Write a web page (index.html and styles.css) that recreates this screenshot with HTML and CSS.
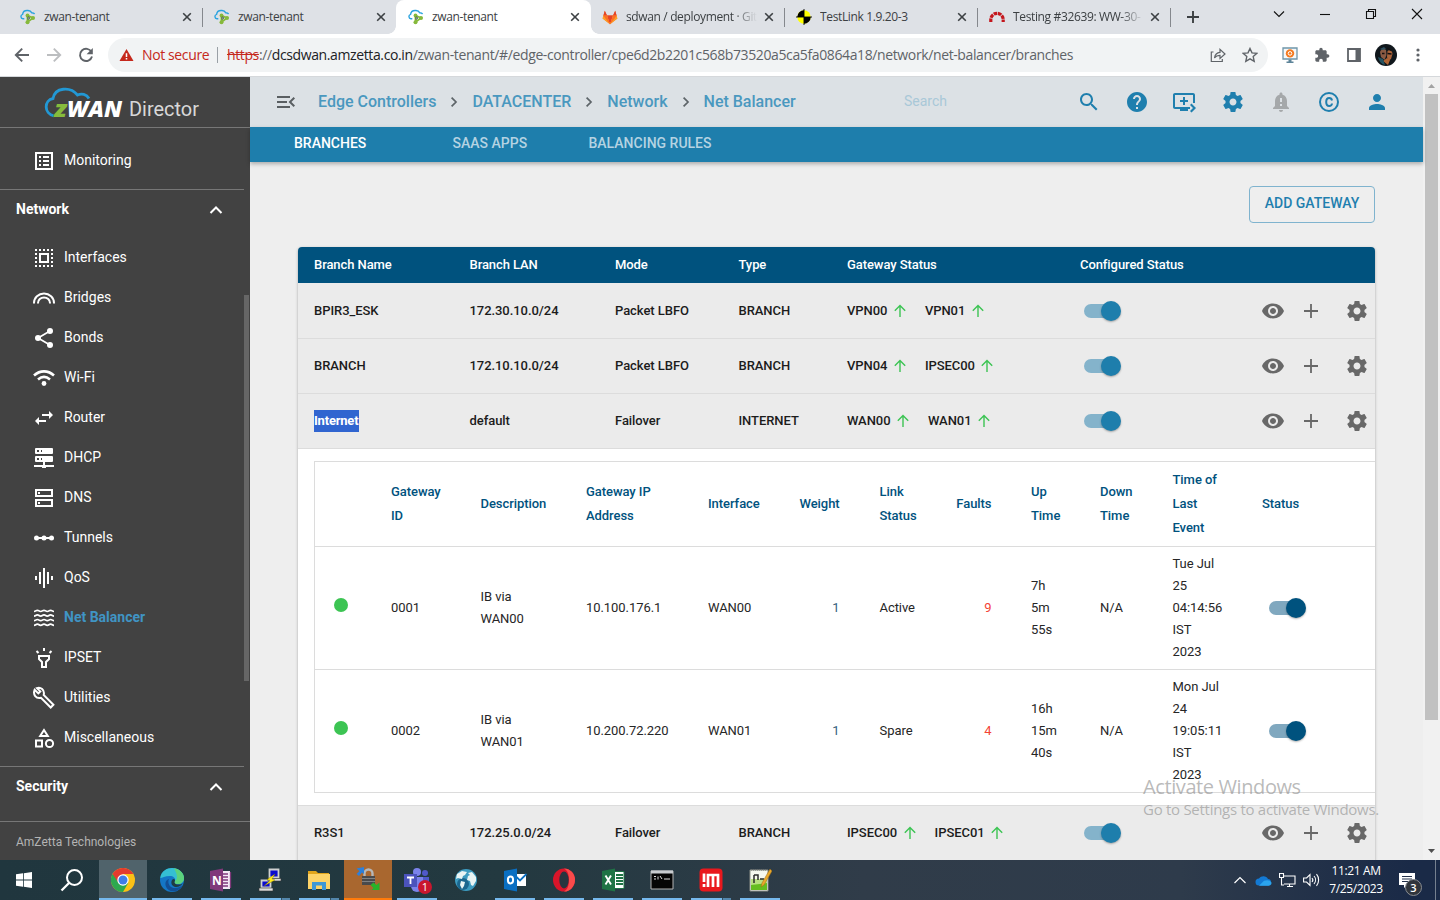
FILE: index.html
```html
<!DOCTYPE html>
<html lang="en">
<head>
<meta charset="utf-8">
<title>zwan-tenant</title>
<link rel="stylesheet" href="styles.css">
</head>
<body>
<svg class="defs" width="0" height="0">
  <symbol id="zwan" viewBox="0 0 16 16"><path d="M4.300 9.800H3a2.300 2.300 0 0 1-.4-4.500C3 2.500 5.300 1.200 8 1.500c2 .2 3.200 1.200 3.800 2.300 1.200 0 2.200.3 2.800 1.200" fill="none" stroke="#2aa3df" stroke-width="1.400"/><path d="M7.500 6.500V13M7.500 6.500L13 9l-5.500 4" stroke="#86b93b" stroke-width="1.800" fill="none"/><circle cx="7.500" cy="6.500" r="1.900" fill="#86b93b"/><circle cx="13" cy="9" r="2" fill="#86b93b"/><circle cx="7.500" cy="13.200" r="2" fill="#86b93b"/><path d="M8 7.700l2 1.300-2 1.500z" fill="#d8e7ee" stroke="#44544a" stroke-width=".8"/></symbol>
  <symbol id="x" viewBox="0 0 10 10"><path d="M1.200 1.200l7.600 7.600M8.800 1.200L1.200 8.800" stroke="#3c4043" stroke-width="1.600" fill="none"/></symbol>
  <symbol id="up" viewBox="0 0 16 16"><path d="M8 14V2.600M2.800 7.800L8 2.600l5.200 5.200" stroke="#3cc453" stroke-width="1.400" fill="none"/></symbol>
  <symbol id="chev" viewBox="0 0 10 12"><path d="M2.600 1.600L7 6l-4.400 4.400" stroke="#5d6468" stroke-width="1.700" fill="none"/></symbol>
  <symbol id="caret" viewBox="0 0 14 10"><path d="M1.500 8L7 2.500 12.500 8" stroke="#fff" stroke-width="2" fill="none"/></symbol>
  <symbol id="eye" viewBox="0 0 24 24"><path d="M12 4.500C7 4.500 2.730 7.610 1 12c1.730 4.390 6 7.500 11 7.500s9.270-3.110 11-7.500c-1.730-4.390-6-7.500-11-7.500zM12 17c-2.760 0-5-2.240-5-5s2.240-5 5-5 5 2.240 5 5-2.240 5-5 5zm0-8c-1.660 0-3 1.340-3 3s1.340 3 3 3 3-1.340 3-3-1.340-3-3-3z"/></symbol>
  <symbol id="plus" viewBox="0 0 24 24"><path d="M19 12.900h-6.100V19h-1.800v-6.100H5v-1.800h6.100V5h1.800v6.100H19z"/></symbol>
  <symbol id="gear" viewBox="0 0 24 24"><path d="M19.430 12.980c.04-.32.07-.64.07-.98s-.03-.66-.07-.98l2.110-1.650c.19-.15.24-.42.12-.64l-2-3.460c-.12-.22-.39-.3-.61-.22l-2.490 1c-.52-.4-1.080-.73-1.690-.98l-.38-2.650C14.460 2.180 14.250 2 14 2h-4c-.25 0-.46.18-.49.42l-.38 2.650c-.61.25-1.170.59-1.690.98l-2.490-1c-.23-.09-.49 0-.61.22l-2 3.460c-.13.22-.07.49.12.64l2.110 1.650c-.04.32-.07.65-.07.98s.03.66.07.98l-2.110 1.650c-.19.15-.24.42-.12.64l2 3.460c.12.22.39.3.61.22l2.490-1c.52.4 1.080.73 1.690.98l.38 2.650c.03.24.24.42.49.42h4c.25 0 .46-.18.49-.42l.38-2.650c.61-.25 1.170-.59 1.690-.98l2.490 1c.23.09.49 0 .61-.22l2-3.460c.12-.22.07-.49-.12-.64l-2.110-1.650zM12 15.500c-1.930 0-3.500-1.570-3.500-3.500s1.570-3.500 3.500-3.500 3.500 1.570 3.500 3.500-1.570 3.500-3.500 3.500z"/></symbol>
</svg>

<div class="tabstrip">
  <div class="tab"><svg class="fav"><use href="#zwan"/></svg><span class="tt">zwan-tenant</span><svg class="close"><use href="#x"/></svg></div>
  <div class="tab sep"><svg class="fav"><use href="#zwan"/></svg><span class="tt">zwan-tenant</span><svg class="close"><use href="#x"/></svg></div>
  <div class="tab active"><svg class="fav"><use href="#zwan"/></svg><span class="tt">zwan-tenant</span><svg class="close"><use href="#x"/></svg></div>
  <div class="tab"><svg class="fav" viewBox="0 0 16 16"><path d="M8 15.300L.6 9.600 2.800 1.800 5 6.600h6l2.200-4.800 2.200 7.800z" fill="#fc6d26"/><path d="M8 15.300L5 6.600h6z" fill="#e24329"/><path d="M.6 9.600L1.500 6.600H5l3 8.700zM15.400 9.600l-.9-3H11l-3 8.700z" fill="#fca326"/><path d="M2.800 1.800L5 6.600H1.400zM13.200 1.800L11 6.600h3.600z" fill="#e24329"/><path d="M1.400 6.600H5L8 15.300 3 9zM14.600 6.600H11L8 15.300 13 9z" fill="#fc6d26"/></svg><span class="tt fade">sdwan / deployment · Git</span><svg class="close"><use href="#x"/></svg></div>
  <div class="tab sep"><svg class="fav" viewBox="0 0 16 16"><circle cx="8" cy="8" r="6.700" fill="#ff0"/><path d="M8 8V1.300A6.700 6.700 0 0 0 1.300 8zM8 8v6.700A6.700 6.700 0 0 0 14.700 8z" fill="#000"/><path d="M8 0v16M0 8h16" stroke="#000" stroke-width=".9"/></svg><span class="tt">TestLink 1.9.20-3</span><svg class="close"><use href="#x"/></svg></div>
  <div class="tab sep"><svg class="fav" viewBox="0 0 16 16"><path d="M1.800 14V11.500A6.200 6.200 0 0 1 14.200 11.500V14" transform="translate(0 -1)" fill="none" stroke="#c4161c" stroke-width="3.200" stroke-dasharray="3.600 .7"/></svg><span class="tt fade">Testing #32639: WW-30-</span><svg class="close"><use href="#x"/></svg></div>
  <div class="newtab sep"><svg width="12" height="12" viewBox="0 0 12 12"><path d="M6 0v12M0 6h12" stroke="#3c4043" stroke-width="1.900"/></svg></div>
  <div class="winctl">
    <svg width="12" height="12" viewBox="0 0 12 12"><path d="M1 3.500l5 5 5-5"/></svg>
    <svg width="12" height="12" viewBox="0 0 12 12"><path d="M1 6.500h10"/></svg>
    <svg width="12" height="12" viewBox="0 0 12 12"><path d="M1.500 3.500h7v7h-7zM3.500 3.500v-2h7v7h-2"/></svg>
    <svg width="12" height="12" viewBox="0 0 12 12"><path d="M1 1l10 10M11 1L1 11"/></svg>
  </div>
</div>

<div class="toolbar">
  <svg class="nav n1" viewBox="0 0 16 16"><path d="M15 8H2M8.200 1.600L1.800 8l6.400 6.400" stroke="#5f6368"/></svg>
  <svg class="nav n2" viewBox="0 0 16 16"><path d="M1 8h13M7.800 1.600L14.200 8l-6.400 6.400" stroke="#bcbec0"/></svg>
  <svg class="nav n3" viewBox="0 0 16 16"><path d="M13.500 5A6.100 6.100 0 1 0 14 9.500" stroke="#5f6368"/><path d="M14.800 1v6.200H8.600z" fill="#5f6368"/></svg>
  <div class="omni">
    <svg class="warn" viewBox="0 0 16 14"><path d="M8 .5L15.500 13.500H.5z" fill="#c5281c"/><path d="M7.200 5h1.600v4H7.200zM7.200 10.200h1.600v1.500H7.200z" fill="#fff"/></svg>
    <span class="ns">Not secure</span><i class="bar"></i>
    <span class="url"><s>https</s>://<b>dcsdwan.amzetta.co.in</b>/zwan-tenant/#/edge-controller/cpe6d2b2201c568b73520a5ca5fa0864a18/network/net-balancer/branches</span>
    <svg class="o1" viewBox="0 0 16 16"><path d="M3.500 5H1.300v9.500h11V12M4.500 11C5 7.500 7 5.600 10 5.400V2.300L15 7l-5 4.400V8.400C7.500 8.300 6 9 4.500 11z" fill="none" stroke="#5f6368" stroke-width="1.200"/></svg>
    <svg class="o2" viewBox="0 0 16 16"><path d="M8 1.500l2 4.400 4.700.5-3.500 3.200 1 4.700L8 11.900l-4.200 2.400 1-4.700L1.300 6.400 6 5.900z" fill="none" stroke="#5f6368" stroke-width="1.400"/></svg>
  </div>
  <div class="ext">
    <svg width="16" height="16" viewBox="0 0 16 16"><path d="M1 1h14v11H1z" fill="#f5f8fa" stroke="#6e95a9" stroke-width="1.300"/><path d="M6.500 12.500h3v2h2V16h-7v-1.500h2z" fill="#5d8499"/><circle cx="8" cy="6.400" r="4.200" fill="#f47a20"/><circle cx="8" cy="6.400" r="1.800" fill="none" stroke="#fff"/></svg>
    <svg width="16" height="16" viewBox="0 0 24 24"><path fill="#5f6368" d="M20.500 11H19V7c0-1.100-.9-2-2-2h-4V3.500C13 2.120 11.880 1 10.500 1S8 2.120 8 3.500V5H4c-1.100 0-1.990.9-1.990 2v3.800H3.500c1.490 0 2.700 1.210 2.700 2.700s-1.210 2.700-2.700 2.700H2V20c0 1.100.9 2 2 2h3.800v-1.500c0-1.490 1.210-2.700 2.700-2.700s2.700 1.210 2.700 2.700V22H17c1.100 0 2-.9 2-2v-4h1.500c1.380 0 2.500-1.120 2.500-2.500S21.880 11 20.500 11z"/></svg>
    <svg width="16" height="16" viewBox="0 0 16 16"><path d="M2 2h12v12H2z" fill="none" stroke="#5f6368" stroke-width="1.800"/><path d="M9.500 2H14v12H9.500z" fill="#5f6368"/></svg>
    <svg width="22" height="22" viewBox="0 0 22 22"><circle cx="11" cy="11" r="11" fill="#10171c"/><path d="M5 8c1-3 4-4 6-2l.5 5-2 5-3.500-3z" fill="#8a5a43"/><path d="M12.500 7c2-2 5 0 5 3l-1.500 5-3 2-1-4z" fill="#a9633a"/><path d="M8 17l4-3 3 2-2 5z" fill="#b06434"/><path d="M3 13l5 2 2 6c-4-1-6-4-7-8z" fill="#245362"/><path d="M5 5l4-2 2 2-4 1z" fill="#2d5160"/><path d="M12.500 9.500l4 .5M7 9.500h2.500M12 4l4 2.500" stroke="#141010" stroke-width="1.300"/></svg>
    <svg width="4" height="16" viewBox="0 0 4 16"><g fill="#5f6368"><circle cx="2" cy="3" r="1.600"/><circle cx="2" cy="8" r="1.600"/><circle cx="2" cy="13" r="1.600"/></g></svg>
  </div>
</div>

<div class="app">
  <aside class="side">
    <div class="logo"><svg width="160" height="50" viewBox="0 0 160 50"><path d="M10 39C-.5 36.500 0 23 9 21.500 11 10.500 26 9 33.500 18c4-1.800 9-1 11.500 3.500" fill="none" stroke="#2298d4" stroke-width="2.800"/><text x="10" y="39.500" class="lz" textLength="13" lengthAdjust="spacingAndGlyphs">z</text><text x="23" y="39.500" class="lw" textLength="55" lengthAdjust="spacingAndGlyphs">WAN</text><text x="85" y="39" class="ld" textLength="70" lengthAdjust="spacingAndGlyphs">Director</text></svg></div>
    <div class="sbody">
      <div class="item mon"><svg viewBox="0 0 24 24"><path d="M4 4h16v16H4z" class="st"/><path d="M7 7h2v2H7zM7 11h2v2H7zM7 15h2v2H7zM11 7h6v2h-6zM11 11h6v2h-6zM11 15h6v2h-6z"/></svg>Monitoring</div>
      <div class="group">Network<svg><use href="#caret"/></svg></div>
      <div class="item"><svg viewBox="0 0 24 24"><path d="M4 3v18M20 3v18M3 4h18M3 20h18" class="st" stroke-dasharray="2"/><path d="M8 8h8v8H8z" class="st"/></svg>Interfaces</div>
      <div class="item"><svg viewBox="0 0 24 24"><path d="M2 17.500V17a10 9.500 0 0 1 20 0v.5M6 17.500V17a6 5.500 0 0 1 12 0v.5" class="st"/></svg>Bridges</div>
      <div class="item"><svg viewBox="0 0 24 24"><path d="M18 5L6 12l12 7" class="st thin"/><circle cx="18" cy="5" r="3"/><circle cx="6" cy="12" r="3"/><circle cx="18" cy="19" r="3"/></svg>Bonds</div>
      <div class="item"><svg viewBox="0 0 24 24"><path d="M2 9.500C8 4 16 4 22 9.500M6 13.500c4-3.400 8-3.400 12 0" class="st thick"/><circle cx="12" cy="17.500" r="2.400"/></svg>Wi-Fi</div>
      <div class="item"><svg viewBox="0 0 24 24"><path d="M6.990 11L3 15l3.990 4v-3H14v-2H6.990v-3zM21 9l-3.990-4v3H10v2h7.010v3L21 9z"/></svg>Router</div>
      <div class="item"><svg viewBox="0 0 24 24"><path fill-rule="evenodd" d="M4 2h16a1 1 0 0 1 1 1v4a1 1 0 0 1-1 1H4a1 1 0 0 1-1-1V3a1 1 0 0 1 1-1zm1 2v2h2V4zm4 0v2h1V4zM4 10h16a1 1 0 0 1 1 1v4a1 1 0 0 1-1 1H4a1 1 0 0 1-1-1v-4a1 1 0 0 1 1-1zm1 2v2h2v-2zm4 0v2h1v-2zM11 16h2v3h9v2h-8v1h-4v-1H2v-2h9z"/></svg>DHCP</div>
      <div class="item"><svg viewBox="0 0 24 24"><path d="M4 4h16v6H4zM4 14h16v6H4z" class="st"/><path d="M6 6h2v2H6zM6 16h2v2H6z"/></svg>DNS</div>
      <div class="item"><svg viewBox="0 0 24 24"><path d="M4 12h16" class="st"/><circle cx="4.500" cy="12" r="2.500"/><circle cx="12" cy="12" r="2.500"/><circle cx="19.500" cy="12" r="2.500"/></svg>Tunnels</div>
      <div class="item"><svg viewBox="0 0 24 24"><path d="M4 10v4M8 6v12M12 2v20M16 6v12M20 10v4" class="st"/></svg>QoS</div>
      <div class="item on"><svg viewBox="0 0 24 24"><path id="wv" class="st thin" d="M2 5.500c1.700 0 1.700-1.200 3.400-1.200S7 5.500 8.700 5.500s1.600-1.200 3.300-1.200 1.600 1.200 3.300 1.200 1.600-1.200 3.300-1.200S20.300 5.500 22 5.500"/><use href="#wv" y="4.600"/><use href="#wv" y="9.200"/><use href="#wv" y="13.800"/></svg>Net Balancer</div>
      <div class="item"><svg viewBox="0 0 24 24"><path d="M7 10h10v3l-3 3v5h-4v-5l-3-3zM12 2v3M4.500 5l2 2M19.500 5l-2 2" class="st"/></svg>IPSET</div>
      <div class="item"><svg viewBox="0 0 24 24"><path d="M2.600 3.800L6.300 7.400l2-2L4.900 2.100C8.500.6 13 3.800 11.700 9l9.700 9.800-2.700 2.700L9 11.800C4 13 .7 8.500 2.600 3.800z" class="st"/></svg>Utilities</div>
      <div class="item"><svg viewBox="0 0 24 24"><path d="M12 4l-3.800 6h7.600zM4 14.500h6v6H4z" class="st"/><circle cx="17.500" cy="17.500" r="3.600" class="st"/></svg>Miscellaneous</div>
      <div class="group sec">Security<svg><use href="#caret"/></svg></div>
      <i class="sthumb"></i>
    </div>
    <div class="sfoot">AmZetta Technologies</div>
  </aside>

  <main class="main">
    <header class="head">
      <svg class="menu" viewBox="0 0 24 24"><path fill="#5a5f62" d="M3 18h13v-2H3zm0-5h10v-2H3zm0-7v2h13V6zm18 9.590L17.420 12 21 8.410 19.590 7l-5 5 5 5z"/></svg>
      <nav class="crumbs"><a>Edge Controllers</a><svg><use href="#chev"/></svg><a>DATACENTER</a><svg><use href="#chev"/></svg><a>Network</a><svg><use href="#chev"/></svg><a>Net Balancer</a></nav>
      <span class="search">Search</span>
      <div class="hicons">
        <svg viewBox="0 0 24 24"><path d="M15.500 14h-.79l-.28-.27C15.410 12.590 16 11.110 16 9.500 16 5.910 13.090 3 9.500 3S3 5.910 3 9.500 5.910 16 9.500 16c1.610 0 3.090-.59 4.230-1.570l.27.28v.79l5 4.990L20.490 19zm-6 0C7.010 14 5 11.990 5 9.500S7.010 5 9.500 5 14 7.010 14 9.500 11.990 14 9.500 14z"/></svg>
        <svg viewBox="0 0 24 24"><path d="M12 2C6.480 2 2 6.480 2 12s4.480 10 10 10 10-4.480 10-10S17.520 2 12 2zm1 17h-2v-2h2zm2.070-7.750l-.9.920C13.450 12.900 13 13.500 13 15h-2v-.5c0-1.100.45-2.100 1.170-2.830l1.240-1.260c.37-.36.59-.86.59-1.410 0-1.100-.9-2-2-2s-2 .9-2 2H8c0-2.210 1.790-4 4-4s4 1.790 4 4c0 .88-.36 1.680-.93 2.250z"/></svg>
        <svg class="queue" viewBox="0 0 24 24"><path d="M21 3H3c-1.110 0-2 .89-2 2v12c0 1.100.89 2 2 2h5v2h8v-2h2v-2H3V5h18v8h2V5c0-1.110-.9-2-2-2zm-8 7V7h-2v3H8v2h3v3h2v-3h3v-2zm11 8l-4.500 4.500L18 21l3-3-3-3 1.500-1.500z"/></svg>
        <svg viewBox="0 0 24 24"><use href="#gear"/></svg>
        <svg class="gray" viewBox="0 0 24 24"><path d="M18 16v-5c0-3.070-1.640-5.640-4.500-6.320V4c0-.83-.67-1.500-1.500-1.500s-1.500.67-1.500 1.500v.68C7.630 5.360 6 7.920 6 11v5l-2 2v1h16v-1zm-5 0h-2v-2h2zm0-4h-2V8h2zm-1 10c1.100 0 2-.9 2-2h-4c0 1.100.89 2 2 2z"/></svg>
        <svg viewBox="0 0 24 24"><circle cx="12" cy="12" r="9" class="ring"/><path d="M15 10.500c-.3-1.700-1.300-2.500-2.800-2.500-2 0-3 1.500-3 4s1 4 3 4c1.500 0 2.600-.8 2.800-2.500" class="ring"/></svg>
        <svg viewBox="0 0 24 24"><path d="M12 12c2.210 0 4-1.790 4-4s-1.790-4-4-4-4 1.790-4 4 1.790 4 4 4zm0 2c-2.670 0-8 1.340-8 4v2h16v-2c0-2.660-5.330-4-8-4z"/></svg>
      </div>
    </header>
    <div class="tabs"><span class="cur">BRANCHES</span><span>SAAS APPS</span><span>BALANCING RULES</span></div>
    <section class="content">
      <div class="actions"><button class="add">ADD GATEWAY</button></div>
      <div class="card">
        <div class="row hd"><span>Branch Name</span><span>Branch LAN</span><span>Mode</span><span>Type</span><span>Gateway Status</span><span>Configured Status</span></div>
        <div class="row"><span class="t">BPIR3_ESK</span><span class="t">172.30.10.0/24</span><span class="t">Packet LBFO</span><span class="t">BRANCH</span><span class="gs t">VPN00<svg><use href="#up"/></svg>VPN01<svg><use href="#up"/></svg></span><span><i class="sw"></i></span><span class="act"><svg><use href="#eye"/></svg><svg><use href="#plus"/></svg><svg><use href="#gear"/></svg></span></div>
        <div class="row"><span class="t">BRANCH</span><span class="t">172.10.10.0/24</span><span class="t">Packet LBFO</span><span class="t">BRANCH</span><span class="gs t">VPN04<svg><use href="#up"/></svg>IPSEC00<svg><use href="#up"/></svg></span><span><i class="sw"></i></span><span class="act"><svg><use href="#eye"/></svg><svg><use href="#plus"/></svg><svg><use href="#gear"/></svg></span></div>
        <div class="row"><span><mark>Internet</mark></span><span class="t">default</span><span class="t">Failover</span><span class="t">INTERNET</span><span class="gs t">WAN00<svg><use href="#up"/></svg>WAN01<svg><use href="#up"/></svg></span><span><i class="sw"></i></span><span class="act"><svg><use href="#eye"/></svg><svg><use href="#plus"/></svg><svg><use href="#gear"/></svg></span></div>
        <div class="detail">
          <div class="inner">
            <div class="irow ih"><span></span><span>Gateway<br>ID</span><span>Description</span><span>Gateway IP<br>Address</span><span>Interface</span><span class="num w">Weight</span><span>Link<br>Status</span><span class="num f">Faults</span><span>Up<br>Time</span><span>Down<br>Time</span><span>Time of<br>Last<br>Event</span><span>Status</span></div>
            <div class="irow"><span><i class="dot"></i></span><span>0001</span><span>IB via<br>WAN00</span><span>10.100.176.1</span><span>WAN00</span><span class="num w">1</span><span>Active</span><span class="num f">9</span><span>7h<br>5m<br>55s</span><span>N/A</span><span>Tue Jul<br>25<br>04:14:56<br>IST<br>2023</span><span><i class="sw dark"></i></span></div>
            <div class="irow"><span><i class="dot"></i></span><span>0002</span><span>IB via<br>WAN01</span><span>10.200.72.220</span><span>WAN01</span><span class="num w">1</span><span>Spare</span><span class="num f">4</span><span>16h<br>15m<br>40s</span><span>N/A</span><span>Mon Jul<br>24<br>19:05:11<br>IST<br>2023</span><span><i class="sw dark"></i></span></div>
          </div>
        </div>
        <div class="row"><span class="t">R3S1</span><span class="t">172.25.0.0/24</span><span class="t">Failover</span><span class="t">BRANCH</span><span class="gs t">IPSEC00<svg><use href="#up"/></svg>IPSEC01<svg><use href="#up"/></svg></span><span><i class="sw"></i></span><span class="act"><svg><use href="#eye"/></svg><svg><use href="#plus"/></svg><svg><use href="#gear"/></svg></span></div>
      </div>
    </section>
  </main>
  <div class="scroll"><svg viewBox="0 0 17 17" width="17" height="17"><path d="M5 11h7L8.500 7z" fill="#a3a3a3"/></svg><i></i><svg viewBox="0 0 17 17" width="17" height="17"><path d="M5 6h7l-3.500 4z" fill="#505050"/></svg></div>
</div>

<div class="taskbar">
  <div class="tk start"><svg width="16" height="16" viewBox="0 0 16 16"><path d="M0 2.300l7-1v6.300H0zM7.800 1.200L16 0v7.600H7.800zM0 8.400h7v6.300l-7-1zM7.800 8.400H16V16l-8.200-1.200z" fill="#fff"/></svg></div>
  <div class="tk find"><svg width="24" height="24" viewBox="0 0 24 24"><circle cx="14.500" cy="9.500" r="7.500" fill="none" stroke="#fff" stroke-width="2"/><path d="M9 15l-7.500 7.500" stroke="#fff" stroke-width="2.300"/></svg></div>
  <div class="tk hot"><svg width="24" height="24" viewBox="0 0 24 24"><circle cx="12" cy="12" r="12" fill="#fbc116"/><path d="M1.600 6A12 12 0 0 0 12 24l5.200-9L12 12z" fill="#2da94f"/><path d="M12 6h10.400A12 12 0 0 0 1.600 6L7 14z" fill="#e33b2e"/><circle cx="12" cy="12" r="5.700" fill="#fff"/><circle cx="12" cy="12" r="4.500" fill="#3f7de8"/></svg></div>
  <div class="tk run"><svg width="24" height="24" viewBox="0 0 24 24"><circle cx="12" cy="12" r="12" fill="#1476c6"/><path d="M.3 10C1 3 7 0 12 0c7 0 12 5 12 10 0 4-3 6-6 6-4 0-4-1.500-3-3 1-3-2-5-5-5-5 0-8 2-9.700 2z" fill="#35bfd3"/><path d="M14 0.200c6 .8 10 5.300 10 9.800 0 4-3 6-6 6-4 0-4-1.500-3-3 4-3 1-9-1-12.800z" fill="#5cd27c"/><path d="M9 11c-2 4 1 9 6 9 3 0 6-1 7.500-3-3 7-11 8-15 4-3-3-3-9 1.500-10z" fill="#134f96"/><path d="M15 12.500c-1 2-.5 4 3.500 4 2 0 3.600-.5 4.600-1.500-3 5-9 5-11 2-1.700-3 0-6 1.500-6 .8 0 1.400.6 1.400 1.500z" fill="#203b43"/></svg></div>
  <div class="tk run"><svg width="24" height="24" viewBox="0 0 24 24"><path d="M11 3h10v18H11z" fill="#f3e9f4"/><path d="M12 6h7M12 9h7M12 12h7M12 15h7M12 18h7M21.500 4v16" stroke="#80397b" stroke-width="1.300"/><path d="M1 3l13-2.500v23L1 21z" fill="#80397b"/><text x="3" y="16.500" class="appl">N</text></svg></div>
  <div class="tk run split"><svg width="24" height="24" viewBox="0 0 24 24"><path d="M11.500 1.500h9v8h-9zM3.500 12.500h9v7h-9z" fill="#0b0bd0" stroke="#d0d0d0" stroke-width="1.800"/><path d="M10 10.500h13v2.500H10zM1 20h14v3H1z" fill="#ddd" stroke="#333" stroke-width=".6"/><path d="M17 6l-8 5.500 3 1L6 18l11-6-3-1z" fill="#ffeb1b" stroke="#786a00" stroke-width=".4"/></svg></div>
  <div class="tk run split"><svg width="24" height="24" viewBox="0 0 24 24"><path d="M1 3h8l2 2h11v16H1z" fill="#e1a51c"/><path d="M1 6h22v15H1z" fill="#fdd368"/><path d="M5 22v-8h14v8h-4v-4.500H9V22z" fill="#3e97d6"/></svg></div>
  <div class="tk rdp"><svg width="24" height="24" viewBox="0 0 24 24"><path d="M8.500 10V6.500a4 4 0 0 1 8 0V10" fill="none" stroke="#b5b7b9" stroke-width="2.400"/><path d="M6 9h13v9H6z" fill="#494a4c"/><path d="M6 11.500h13M6 14.500h13" stroke="#808182"/><path d="M.5 1.500L8 0v7L6 5.500 3 9 .5 7l3-3z" fill="#2d7fd9"/><path d="M23.500 15.500V23h-8l2-2-3-3 3-2.500 3 2.500z" fill="#28b32a"/></svg></div>
  <div class="tk run"><svg width="26" height="24" viewBox="0 0 26 24"><circle cx="13" cy="4" r="4" fill="#7b83eb"/><circle cx="21" cy="5" r="3" fill="#5059c9"/><path d="M17 9h8v7a5 5 0 0 1-7 4z" fill="#5059c9"/><path d="M7 9h12v9a6 6 0 0 1-12 0z" fill="#7b83eb"/><path d="M0 6h13v13H0z" fill="#4b53bc"/><path d="M3 9.500h7M6.500 9.500V16" stroke="#fff" stroke-width="1.800"/></svg><b class="badge">1</b></div>
  <div class="tk"><svg width="22" height="22" viewBox="0 0 22 22"><circle cx="11" cy="11" r="11" fill="#3d9bc0"/><circle cx="8" cy="15" r="6" fill="#1b678f"/><path d="M2 5l5-3 5 1-2 3-2 1-1 3-4-1-2 1zM6 12l4 1-1 4-2 3-2-4zM13 4l4-1 4 5v4l-3 5-2-1-1-4-3-1 1-4 2-1z" fill="#e9f4f4"/></svg></div>
  <div class="tk run"><svg width="24" height="24" viewBox="0 0 24 24"><path d="M12 6h11v12H12z" fill="#fff"/><path d="M13.500 9l3.500 3.500L23.500 6" fill="none" stroke="#0a6fc2" stroke-width="1.800"/><path d="M1 3l13-2.500v23L1 21z" fill="#0a6fc2"/><ellipse cx="7.500" cy="12" rx="2.600" ry="3.400" fill="none" stroke="#fff" stroke-width="2"/></svg></div>
  <div class="tk run"><svg width="24" height="24" viewBox="0 0 24 24"><ellipse cx="12" cy="12" rx="11" ry="11.500" fill="#d9152a"/><path d="M12 .5a11 11.500 0 0 1 0 23c4-2 5-7 5-11.500s-1-9.500-5-11.500z" fill="#fa4b4b"/><ellipse cx="12" cy="12" rx="4.700" ry="8.500" fill="#28353f"/></svg></div>
  <div class="tk run"><svg width="24" height="24" viewBox="0 0 24 24"><path d="M13 3.500h10v17H13z" fill="#fff" stroke="#1f7345"/><path d="M15 7h7M15 10h7M15 13h7M15 16h7" stroke="#1f7345" stroke-width="1.800"/><path d="M1 3l13-2.500v23L1 21z" fill="#1f7345"/><path d="M4.500 7.500l5.500 9M10 7.500l-5.500 9" stroke="#fff" stroke-width="1.900"/></svg></div>
  <div class="tk run"><svg width="24" height="24" viewBox="0 0 24 24"><path d="M1 3h22v18H1z" fill="#050505" stroke="#b4b4b4"/><path d="M1 2.500h22v3H1z" fill="#c9ccd0"/><path d="M4 8.500h2M4 11h2M8 8.500v3M10 8l2 3M14 11h6" stroke="#ddd"/></svg></div>
  <div class="tk run split"><svg width="24" height="24" viewBox="0 0 24 24"><rect x=".5" y=".5" width="23" height="23" rx="4" fill="#e9181d"/><path d="M5 5.500v8.500M5 16v3M9 19V7h10v12M14 7v12" fill="none" stroke="#fff" stroke-width="2.700"/></svg></div>
  <div class="tk run"><svg width="24" height="24" viewBox="0 0 24 24"><path d="M2 2h18v21H2z" fill="#f6f8ef" stroke="#8a8f86"/><path d="M3 13l16-2v11H3z" fill="#65bd20"/><path d="M3 11h16v4L3 17z" fill="#b8e080"/><path d="M6 7v8M6 7h4v5M12 11h4" stroke="#2b2b2b" stroke-width="1.500" fill="none"/><path d="M22 1l2 2-8 14-3 2 1-4z" fill="#eaa82b" stroke="#9b6a17" stroke-width=".5"/><path d="M3 2h16" stroke="#777" stroke-dasharray="1"/></svg></div>
  <div class="tray">
    <svg width="14" height="10" viewBox="0 0 14 10"><path d="M1.500 8L7 2.500 12.500 8" fill="none" stroke="#fff" stroke-width="1.200"/></svg>
    <svg width="17" height="11" viewBox="0 0 17 11"><path d="M4 10.500a3.500 3.500 0 0 1 0-7A5.300 5.300 0 0 1 13 4a3.300 3.300 0 0 1 .5 6.500z" fill="#1379d3"/><path d="M4 10.800l5-5c3-1 6-1 7.500 2 0 2-1.500 3-3 3z" fill="#2ba4ee"/></svg>
    <svg width="17" height="14" viewBox="0 0 17 14"><path d="M5 3h11v8H5M8 13.500h6M10.500 11v2.500M.5.500h4v4h-4zM2.500 4.500V12H5" fill="none" stroke="#fff" stroke-width="1.100"/></svg>
    <svg width="17" height="14" viewBox="0 0 17 14"><path d="M.6 5h3L7 1.500v11L3.600 9h-3zM9 5a3 3 0 0 1 0 4M11 3a6 6 0 0 1 0 8M13.500 1.200a9 9 0 0 1 0 11.600" fill="none" stroke="#fff" stroke-width="1.100"/></svg>
    <div class="clock"><span>11:21 AM</span><span>7/25/2023</span></div>
    <div class="note"><svg width="16" height="15" viewBox="0 0 16 15"><path d="M0 0h16v12H8l-3 3v-3H0z" fill="#fff"/><path d="M3 3.500h10M3 6h10M3 8.500h6" stroke="#22304a"/></svg><b>3</b></div>
    <i class="peek"></i>
  </div>
</div>
<div class="wm"><div>Activate Windows</div><p>Go to Settings to activate Windows.</p></div>
</body>
</html>
```

FILE: styles.css
```css
* { box-sizing: border-box; }
body { margin: 0; width: 1440px; height: 900px; overflow: hidden; display: flex; flex-direction: column; font-family: Roboto, "Liberation Sans", sans-serif; position: relative; }
.defs { position: absolute; }
svg { display: block; flex: none; }

.tabstrip { height: 34px; background: #dee1e6; display: flex; padding-left: 8px; flex: none; font: 12px "Open Sans", sans-serif; color: #3c4043; }
.tab { width: 194px; display: flex; align-items: center; padding-left: 12px; position: relative; }
.tab:nth-child(n+5) { width: 193px; }
.tab.active { background: #fff; border-radius: 8px 8px 0 0; width: 195px; margin-right: -1px; }
.tab.active::before, .tab.active::after { content: ""; position: absolute; bottom: 0; width: 8px; height: 8px; }
.tab.active::before { left: -8px; background: radial-gradient(circle at 0 0, transparent 7.500px, #fff 8px); }
.tab.active::after { right: -8px; background: radial-gradient(circle at 100% 0, transparent 7.500px, #fff 8px); }
.sep::before { content: ""; position: absolute; left: 0; top: 8px; width: 1px; height: 19px; background: #85888d; }
.fav { width: 16px; height: 16px; }
.tt { margin-left: 8px; width: 131px; white-space: nowrap; overflow: hidden; letter-spacing: -.36px; padding-bottom: 1px; }
.fade { -webkit-mask-image: linear-gradient(90deg, #000 82%, transparent); mask-image: linear-gradient(90deg, #000 82%, transparent); }
.close { width: 10px; height: 10px; margin-left: 7px; }
.tab:nth-child(n+5) .close { margin-left: 6px; }
.newtab { position: relative; padding: 11px 0 0 17px; width: 46px; }
.winctl { display: flex; gap: 34px; padding-top: 8px; margin-left: 57px; }
.winctl path { fill: none; stroke: #111; stroke-width: 1.100; }

.toolbar { height: 43px; background: #fff; border-bottom: 1px solid #d5d8db; display: flex; align-items: center; flex: none; padding-left: 14px; }
.nav { width: 16px; height: 16px; fill: none; stroke-width: 1.900; margin-right: 16px; }
.n3 path + path { stroke: none; }
.omni { width: 1160px; height: 34px; border-radius: 17px; background: #f1f3f4; display: flex; align-items: center; padding-left: 11px; margin-left: -2px; font: 14px "Open Sans", sans-serif; }
.warn { width: 15px; height: 14px; }
.ns { color: #c5281c; margin-left: 8px; width: 68px; white-space: nowrap; letter-spacing: -.38px; }
.bar { width: 1px; height: 16px; background: #9aa0a6; margin: 0 9px 0 7px; }
.url { color: #5f6368; width: 970px; white-space: nowrap; letter-spacing: -.38px; }
.ns, .url { padding-bottom: 1px; }
.url s { color: #c5281c; } .url b { color: #202124; font-weight: 400; }
.o1 { width: 16px; height: 16px; margin-left: 13px; } .o2 { width: 16px; height: 16px; margin-left: 16px; }
.ext { display: flex; align-items: center; gap: 16px; margin-left: 14px; }
.ext svg:nth-child(4) { margin-left: -3px; }
.ext svg:nth-child(5) { margin-left: 3px; }

.app { height: 783px; display: flex; flex: none; overflow: hidden; }
.side { width: 250px; background: #424242; color: #fff; display: flex; flex-direction: column; font-size: 14px; flex: none; }
.logo { height: 51px; border-bottom: 1px solid #777; padding-left: 44px; flex: none; }
.lz, .lw { font: italic 800 23px "Open Sans", sans-serif; fill: #fff; } .lz { fill: #86bc3d; }
.ld { font: 400 21px Roboto; fill: #d8d8d8; }
.sbody { position: relative; height: 693px; flex: none; }
.item { height: 40px; display: flex; align-items: center; padding-left: 32px; }
.item svg { width: 24px; height: 24px; fill: #fff; margin: 2px 8px 0 0; }
.st { fill: none; stroke: #fff; stroke-width: 2; }
.thin { stroke-width: 1.700; }
.thick { stroke-width: 2.600; }
.mon { height: 61px; padding-top: 3px; }
.group { width: 244px; height: 48px; border-top: 1px solid #777; font-weight: 700; display: flex; justify-content: space-between; padding: 11px 21px 0 16px; }
.group svg { width: 14px; height: 10px; margin-top: 4px; }
.sec { margin-top: 9px; }
.item.on { color: #4094c4; font-weight: 700; }
.sthumb { position: absolute; right: 1px; top: 167px; width: 5px; height: 386px; background: #666; }
.sfoot { border-top: 1px solid #777; flex: 1; padding: 13px 0 0 16px; font-size: 12px; color: #b4b4b4; line-height: 14px; }

.main { width: 1173px; background: #eee; display: flex; flex-direction: column; }
.head { height: 50px; background: #dce1e5; display: flex; align-items: center; padding: 0 0 2px 24px; flex: none; }
.menu { width: 24px; height: 24px; margin-top: 1px; }
.crumbs { display: flex; align-items: center; margin-left: 20px; color: #4a98bf; font-size: 16px; font-weight: 500; width: 586px; }
.crumbs svg { width: 10px; height: 12px; margin: 2px 13px 0; }
.search { color: #a9c8d8; font-size: 14px; width: 173px; }
.hicons { display: flex; gap: 24px; margin-top: 1px; }
.hicons svg { width: 24px; height: 24px; fill: #1f7fae; }
.hicons .queue { margin: 0 1px 0 -1px; }
.hicons .gray { fill: #a5a8aa; }
.ring { fill: none; stroke: #1f7fae; stroke-width: 2; }
.tabs { height: 35px; background: #1e7eac; box-shadow: 0 2px 4px rgba(0,0,0,.28); flex: none; color: #b5d3e2; font-size: 14px; font-weight: 500; line-height: 33px; padding-left: 44px; display: flex; z-index: 1; }
.tabs span:nth-child(1) { width: 158.500px; } .tabs span:nth-child(2) { width: 136px; }
.tabs .cur { color: #fff; }
.content { padding: 24px 48px 0; }
.actions { display: flex; justify-content: flex-end; }
.add { width: 126px; height: 37px; border: 1px solid #7fb3ce; border-radius: 4px; background: none; color: #1f7fae; font: 500 14px Roboto; padding: 0 0 3px; white-space: nowrap; }
.card { margin-top: 24px; background: #ebebeb; border-radius: 4px 4px 0 0; box-shadow: 0 1px 3px rgba(0,0,0,.3); font-size: 13px; height: 660px; color: #1c1c1c; overflow: hidden; }
.row { display: grid; grid-template-columns: 155.500px 145.500px 123.500px 108.500px 233px 173px 122px; height: 55px; border-bottom: 1px solid #dcdcdc; padding-left: 16px; align-items: center; font-weight: 500; letter-spacing: -.06px; }
.row > span { white-space: nowrap; }
.t { padding-bottom: 2px; }
.hd { height: 36px; border: 0; background: #00527e; color: #fff; letter-spacing: -.08px; padding-bottom: 1px; margin-bottom: 1px; }
mark { background: #3065d0; color: #fff; display: block; line-height: 22px; height: 22px; width: 45px; letter-spacing: -.2px; font-weight: 700; }
.gs { display: flex; align-items: center; }
.gs svg { width: 16px; height: 16px; margin: 2px 17px 0 4.500px; }
.sw { display: block; width: 34px; height: 14px; border-radius: 7px; background: #84b3cb; position: relative; margin-left: 4px; }
.sw::after { content: ""; position: absolute; right: -3px; top: -3px; width: 20px; height: 20px; border-radius: 50%; background: #1e7eac; box-shadow: 0 1px 2px rgba(0,0,0,.3); }
.dark { background: #80a8bf; margin-left: 7px; }
.dark::after { background: #00527e; }
.act { display: flex; align-items: center; padding-left: 8px; }
.act svg { width: 24px; height: 24px; fill: #686868; }
.act svg:nth-child(2) { margin: 0 22px 0 14px; }
.detail { height: 357px; background: #fff; padding: 12px 0 0 16px; border-bottom: 1px solid #dcdcdc; }
.inner { height: 332px; border: 1px solid #dcdcdc; border-right: 0; }
.irow { display: grid; grid-template-columns: 76px 89.500px 105.500px 122px 91.500px 80px 76.500px 75px 69px 72.500px 89.500px 113px; height: 123px; align-items: center; line-height: 22px; white-space: nowrap; border-bottom: 1px solid #dcdcdc; letter-spacing: -.06px; }
.irow:last-child { border: 0; height: 122px; }
.ih { height: 85px; line-height: 24px; font-weight: 500; color: #00527e; }
.num { text-align: right; } .w { width: 40px; } .f { width: 35.500px; }
.irow:not(.ih) .w { color: #35617c; } .irow:not(.ih) .f { color: #f44336; }
.irow:not(.ih) { color: #262626; }
.dot { display: block; width: 14px; height: 14px; border-radius: 50%; background: #3cc453; margin: -6px 0 0 19px; }
.scroll { width: 17px; background: #f1f1f1; display: flex; flex-direction: column; justify-content: space-between; }
.scroll i { width: 13px; height: 626px; background: #c1c1c1; margin: 0 0 auto 2px; }

.taskbar { height: 40px; flex: none; display: flex; background: linear-gradient(90deg, #20363e 0, #233940 35%, #303c49 60%, #2e3b4b 82%, #1a2a47 98%); color: #fff; }
.tk { width: 48px; margin-right: 1px; display: flex; align-items: center; justify-content: center; position: relative; }
.start { margin: 0; } .find { margin-right: 3px; }
.run::after { content: ""; position: absolute; left: 4px; bottom: 0; width: 40px; height: 2px; background: #76b9ed; }
.split::after { background: linear-gradient(90deg, #76b9ed 31px, #35505f 31px, #35505f 32px, #5386ab 32px); }
.hot { background: #50636b; border-bottom: 2px solid #76b9ed; padding-top: 2px; }
.rdp { background: #a9672f; border-bottom: 2px solid #ff7b0b; }
.badge { position: absolute; left: 25px; top: 20px; width: 14px; height: 14px; border-radius: 7px; background: #c9162e; font: 11px/14px "Open Sans", sans-serif; text-align: center; }
.appl { font: 700 12px "Open Sans", sans-serif; fill: #fff; }
.tray { margin-left: auto; display: flex; align-items: center; font: 12px "Open Sans", sans-serif; }
.tray > svg:nth-child(1) { margin-right: 8px; } .tray > svg:nth-child(2) { margin-right: 7px; } .tray > svg:nth-child(3) { margin-right: 7px; }
.clock { display: flex; flex-direction: column; align-items: center; line-height: 18px; width: 70px; letter-spacing: -.36px; margin: 0 -1px 0 1px; white-space: nowrap; }
.note { position: relative; margin-left: 9px; width: 36px; }
.note b { position: absolute; left: 6px; top: 6px; width: 17px; height: 17px; border-radius: 9px; border: 1px solid #8a8d92; background: #30353c; font: 600 11px/15px "Open Sans", sans-serif; text-align: center; }
.peek { width: 5px; height: 40px; border-left: 1px solid #75808f; }
.wm { position: absolute; left: 1143px; top: 773px; color: rgba(140,140,140,.6); font: 20px/27px "Open Sans", sans-serif; white-space: nowrap; }
.wm div { letter-spacing: -.4px; }
.wm p { margin: 0; font-size: 15px; line-height: 18px; letter-spacing: -.28px; }
```
